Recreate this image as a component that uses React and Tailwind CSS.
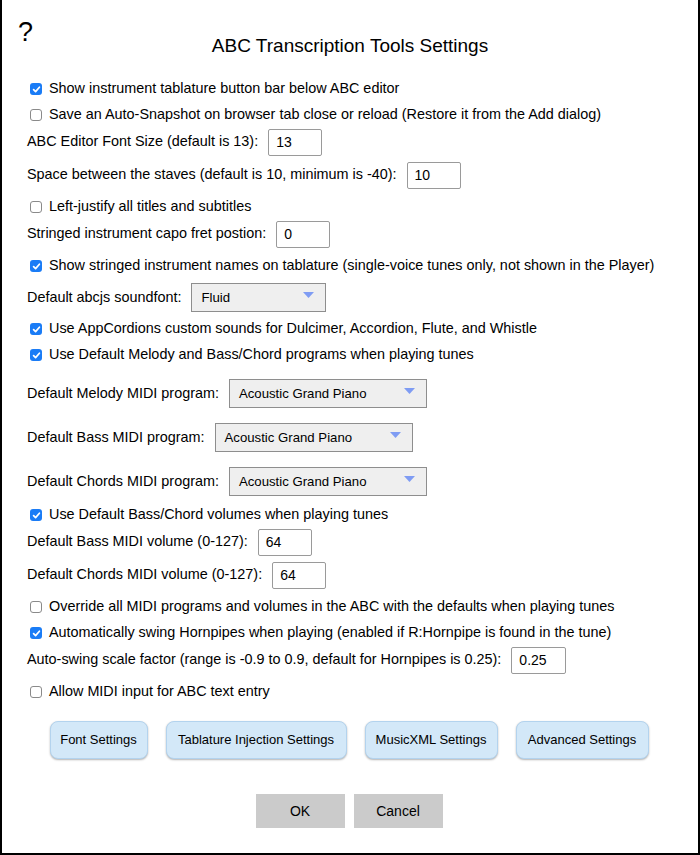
import React from "react";

const font = { fontFamily: '"Liberation Sans", Arial, Helvetica, sans-serif' };

function Check({ checked, label }) {
  return (
    <div className="flex h-[26px] items-center pl-[28px]">
      {checked ? (
        <span className="flex h-[12px] w-[12px] shrink-0 items-center justify-center rounded-[3px] bg-[#1a7cf6]">
          <svg width="9" height="9" viewBox="0 0 9 9">
            <path d="M1.6 4.6 L3.6 6.6 L7.4 2.2" stroke="white" strokeWidth="1.7" fill="none" strokeLinecap="round" strokeLinejoin="round" />
          </svg>
        </span>
      ) : (
        <span className="h-[12px] w-[12px] shrink-0 rounded-[3px] border border-[#8a8a8a] bg-white" />
      )}
      <span className="ml-[7px] whitespace-nowrap text-[14.4px] text-black">{label}</span>
    </div>
  );
}

function InputRow({ label, value, w = "w-[54px]" }) {
  return (
    <div className="pb-[5px]">
      <div className="flex h-[28px] items-center pl-[25px]">
        <span className="whitespace-nowrap text-[14.4px] text-black">{label}</span>
        <div className={`ml-[10px] ${w} flex h-[27px] items-center rounded-[2px] border border-[#9a9a9a] bg-white pl-[7px] text-[14px] text-black`}>
          {value}
        </div>
      </div>
    </div>
  );
}

function Select({ value, w }) {
  return (
    <div className={`${w} relative flex h-[29px] items-center border border-[#8e8e8e] bg-[#efefef] pl-[9px] text-[13.2px] text-black`}>
      {value}
      <svg className="absolute right-[11px] top-[8px]" width="11" height="6" viewBox="0 0 11 6">
        <path d="M0 0 L11 0 L5.5 6 Z" fill="#7f9cf3" />
      </svg>
    </div>
  );
}

function SelectRow({ label, value, w, cls }) {
  return (
    <div className={cls}>
      <div className="flex h-[29px] items-center pl-[25px]">
        <span className="mr-[10px] whitespace-nowrap text-[14.4px] text-black">{label}</span>
        <Select value={value} w={w} />
      </div>
    </div>
  );
}

function BlueBtn({ children, w }) {
  return (
    <div className={`${w} flex h-[38px] items-center justify-center rounded-[8px] border border-[#b3d3ee] bg-[#d3e8f8] text-[13px] text-black shadow-[0_1px_2px_rgba(0,0,0,0.3)]`}>
      {children}
    </div>
  );
}

export default function App() {
  return (
    <div style={font} className="box-border h-[855px] w-[700px] border-x-2 border-b-2 border-black bg-white">
      <div className="h-[20px]" />
      <div className="flex h-[24px] items-center pl-[16px] text-[27px] leading-none text-black">?</div>
      <div className="mt-[-9px] text-center text-[19px] leading-[22px] text-black">ABC Transcription Tools Settings</div>
      <div className="h-[19px]" />
      <Check checked label="Show instrument tablature button bar below ABC editor" />
      <Check label="Save an Auto-Snapshot on browser tab close or reload (Restore it from the Add dialog)" />
      <InputRow label="ABC Editor Font Size (default is 13):" value="13" />
      <InputRow label="Space between the staves (default is 10, minimum is -40):" value="10" />
      <Check label="Left-justify all titles and subtitles" />
      <InputRow label="Stringed instrument capo fret postion:" value="0" />
      <Check checked label="Show stringed instrument names on tablature (single-voice tunes only, not shown in the Player)" />
      <SelectRow cls="pt-[4px] pb-[4px]" label="Default abcjs soundfont:" value="Fluid" w="w-[135px]" />
      <Check checked label="Use AppCordions custom sounds for Dulcimer, Accordion, Flute, and Whistle" />
      <Check checked label="Use Default Melody and Bass/Chord programs when playing tunes" />
      <SelectRow cls="pt-[11px] pb-[6px]" label="Default Melody MIDI program:" value="Acoustic Grand Piano" w="w-[198px]" />
      <SelectRow cls="pt-[9px] pb-[6px]" label="Default Bass MIDI program:" value="Acoustic Grand Piano" w="w-[198px]" />
      <SelectRow cls="pt-[9px] pb-[6px]" label="Default Chords MIDI program:" value="Acoustic Grand Piano" w="w-[198px]" />
      <Check checked label="Use Default Bass/Chord volumes when playing tunes" />
      <InputRow label="Default Bass MIDI volume (0-127):" value="64" />
      <InputRow label="Default Chords MIDI volume (0-127):" value="64" />
      <Check label="Override all MIDI programs and volumes in the ABC with the defaults when playing tunes" />
      <Check checked label="Automatically swing Hornpipes when playing (enabled if R:Hornpipe is found in the tune)" />
      <InputRow label="Auto-swing scale factor (range is -0.9 to 0.9, default for Hornpipes is 0.25):" value="0.25" w="w-[55px]" />
      <Check label="Allow MIDI input for ABC text entry" />
      <div className="mt-[16px] flex justify-center gap-[18px] pr-[2px]">
        <BlueBtn w="w-[98px]">Font Settings</BlueBtn>
        <BlueBtn w="w-[181px]">Tablature Injection Settings</BlueBtn>
        <BlueBtn w="w-[133px]">MusicXML Settings</BlueBtn>
        <BlueBtn w="w-[133px]">Advanced Settings</BlueBtn>
      </div>
      <div className="mt-[35px] flex justify-center gap-[9px] pr-[2px]">
        <div className="flex h-[34px] w-[89px] items-center justify-center bg-[#cbcbcb] text-[14px] text-black">OK</div>
        <div className="flex h-[34px] w-[89px] items-center justify-center bg-[#cbcbcb] text-[14px] text-black">Cancel</div>
      </div>
    </div>
  );
}
